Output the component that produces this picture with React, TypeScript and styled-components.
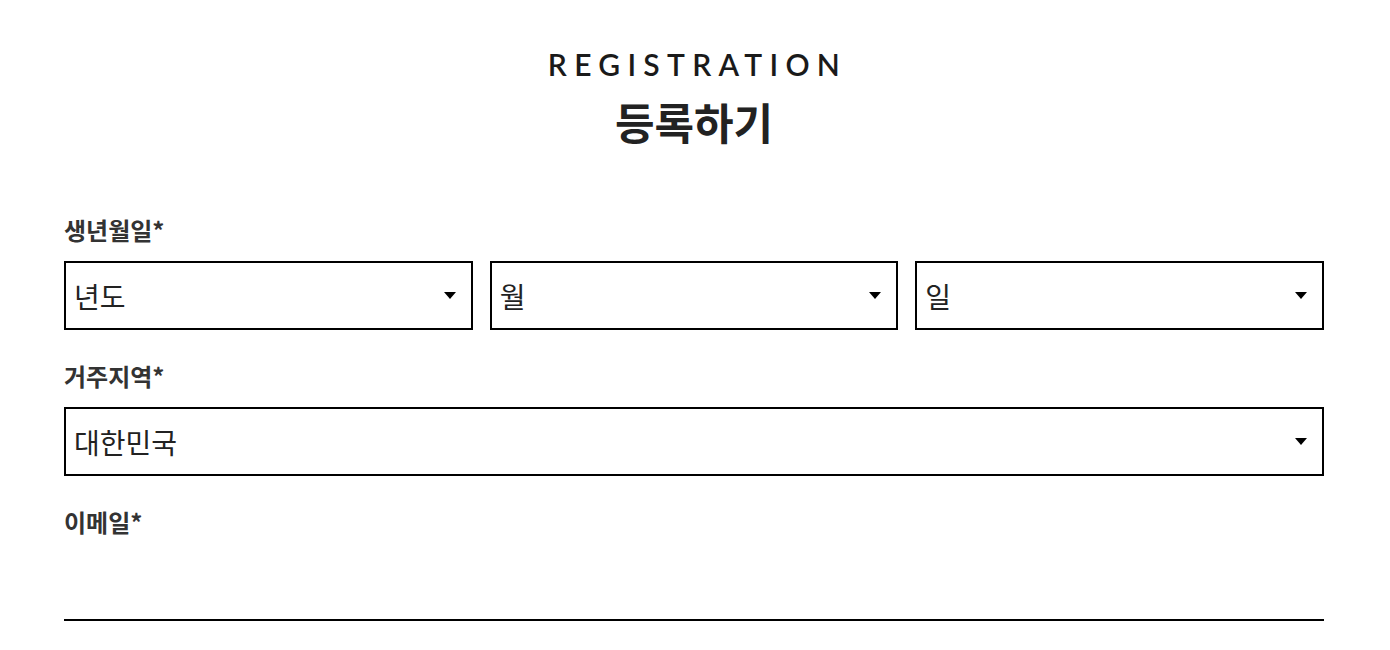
import React from "react";
import styled, { createGlobalStyle } from "styled-components";

const Global = createGlobalStyle`
  html, body { margin: 0; padding: 0; background: #fff; }
  body { font-family: "Noto Sans CJK KR", "Noto Sans", sans-serif; color: #222; }
  * { box-sizing: border-box; }
`;

const Page = styled.div`
  width: 1260px;
  margin-left: 64px;
  padding-top: 46px;
`;

const Header = styled.header`
  display: flex;
  flex-direction: column;
  align-items: center;
`;

const Eyebrow = styled.div`
  font-family: Lato, "Liberation Sans", sans-serif;
  font-size: 30px;
  font-weight: 600;
  letter-spacing: 7.3px;
  padding-left: 7px;
  line-height: 36px;
  color: #1a1a1a;
`;

const Title = styled.h1`
  margin: 13px 0 0;
  font-family: "Noto Sans CJK KR", sans-serif;
  font-size: 43px;
  font-weight: 700;
  line-height: 52px;
  color: #222;
`;

const Form = styled.div`
  margin-top: 67px;
  display: flex;
  flex-direction: column;
`;

const Field = styled.div`
  display: flex;
  flex-direction: column;
  margin-bottom: 30px;
`;

const Label = styled.label`
  font-family: "Noto Sans CJK KR", sans-serif;
  font-size: 24px;
  font-weight: 700;
  line-height: 32px;
  color: #333;
  margin-bottom: 15px;
`;

const Row = styled.div<{ $cols: number }>`
  display: grid;
  grid-template-columns: repeat(${(p) => p.$cols}, 1fr);
  column-gap: 17px;
`;

const SelectBox = styled.div`
  height: 69px;
  border: 2px solid #000;
  display: flex;
  align-items: center;
  justify-content: space-between;
  padding: 0 15px 0 8px;
  font-family: "Noto Sans CJK KR", sans-serif;
  font-size: 28px;
  color: #222;
`;

const Caret = styled.span`
  width: 0;
  height: 0;
  border-left: 6px solid transparent;
  border-right: 6px solid transparent;
  border-top: 7px solid #000;
`;

const Underline = styled.div`
  height: 68px;
  border-bottom: 2px solid #000;
`;

const Select = ({ text }: { text: string }) => (
  <SelectBox>
    <span>{text}</span>
    <Caret />
  </SelectBox>
);

export default function App() {
  return (
    <>
      <Global />
      <Page>
        <Header>
          <Eyebrow>REGISTRATION</Eyebrow>
          <Title>등록하기</Title>
        </Header>
        <Form>
          <Field>
            <Label>생년월일*</Label>
            <Row $cols={3}>
              <Select text="년도" />
              <Select text="월" />
              <Select text="일" />
            </Row>
          </Field>
          <Field>
            <Label>거주지역*</Label>
            <Row $cols={1}>
              <Select text="대한민국" />
            </Row>
          </Field>
          <Field>
            <Label>이메일*</Label>
            <Underline />
          </Field>
        </Form>
      </Page>
    </>
  );
}
